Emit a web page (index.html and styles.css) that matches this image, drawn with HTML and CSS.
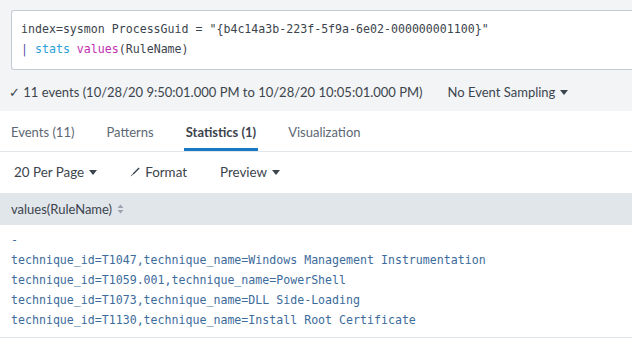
FILE: index.html
```html
<!DOCTYPE html>
<html lang="en">
<head>
    <meta charset="UTF-8">
    <title>Search</title>
    <link rel="stylesheet" href="styles.css">
</head>
<body>

    <!-- Search bar -->
    <div class="search-area">
        <div class="search-box">
            <div class="q-line">index=sysmon ProcessGuid = "{b4c14a3b-223f-5f9a-6e02-000000001100}"</div>
            <div class="q-line"><span class="q-pipe">|</span> <span class="q-cmd">stats</span> <span class="q-fn">values</span>(RuleName)</div>
        </div>
        <div class="status">
            <span class="status-text">&#10003; 11 events (10/28/20 9:50:01.000 PM to 10/28/20 10:05:01.000 PM)</span>
            <span class="dropdown">No Event Sampling <span class="caret"></span></span>
        </div>
    </div>

    <!-- Tabs -->
    <div class="tabs">
        <div class="tab">Events (11)</div>
        <div class="tab">Patterns</div>
        <div class="tab active">Statistics (1)</div>
        <div class="tab">Visualization</div>
    </div>

    <!-- Toolbar -->
    <div class="toolbar">
        <span class="dropdown">20 Per Page <span class="caret"></span></span>
        <span class="tool">
            <svg class="pencil" width="10" height="10" viewBox="0 0 10 10"><path d="M8.6 0.4 L9.6 1.4 L3.6 7.4 L2.6 6.4 Z" fill="#3c444d"/><path d="M2.2 6.9 L3.1 7.8 L0.5 9.5 Z" fill="#3c444d"/></svg>
            Format
        </span>
        <span class="dropdown">Preview <span class="caret"></span></span>
    </div>

    <!-- Results table -->
    <div class="table-head">
        values(RuleName)
        <svg class="sort" width="7" height="10" viewBox="0 0 7 10"><path d="M0.5 4 L3.5 0.5 L6.5 4 Z M0.5 6 L3.5 9.5 L6.5 6 Z" fill="#9aa4ae"/></svg>
    </div>
    <div class="rows">
        <div class="row">-</div>
        <div class="row">technique_id=T1047,technique_name=Windows Management Instrumentation</div>
        <div class="row">technique_id=T1059.001,technique_name=PowerShell</div>
        <div class="row">technique_id=T1073,technique_name=DLL Side-Loading</div>
        <div class="row">technique_id=T1130,technique_name=Install Root Certificate</div>
    </div>

</body>
</html>
```

FILE: styles.css
```css
/* General */
body {
    margin: 0;
    font-family: Lato, "Open Sans", sans-serif;
    font-size: 13px;
    color: #3c444d;
    background-color: #ffffff;
}

/* Search area */
.search-area {
    background-color: #f2f4f5;
    padding: 10px 0 9px 11px;
}

.search-box {
    background-color: #ffffff;
    border: 1px solid #c3cbd4;
    border-right: none;
    border-radius: 3px 0 0 3px;
    padding: 8px 0 10px 9px;
    font-family: "DejaVu Sans Mono", monospace;
    font-size: 11.6px;
    color: #3c444d;
}

.q-line {
    line-height: 20px;
    white-space: pre;
}

.q-pipe { color: #5b4fa8; }
.q-cmd { color: #2a9fd8; }
.q-fn { color: #c12eb2; }

.status {
    display: flex;
    gap: 25px;
    margin: 12px 0 0 -2px;
    line-height: 20px;
}

.dropdown {
    display: inline-flex;
    align-items: center;
    gap: 5px;
}

.caret {
    width: 0;
    height: 0;
    border-left: 4px solid transparent;
    border-right: 4px solid transparent;
    border-top: 5px solid #3c444d;
}

/* Tabs */
.tabs {
    display: flex;
    gap: 28px;
    padding: 11px 0 0 9px;
    border-bottom: 1px solid #e1e6eb;
}

.tab {
    padding: 0 2px 6px;
    line-height: 20px;
    color: #5c6773;
    border-bottom: 3px solid transparent;
}

.tab.active {
    font-weight: bold;
    color: #3c444d;
    border-bottom-color: #1a78c2;
}

/* Toolbar */
.toolbar {
    display: flex;
    gap: 33px;
    padding: 10px 0 11px 14px;
    line-height: 20px;
    font-size: 13.4px;
}

.tool {
    display: inline-flex;
    align-items: center;
    gap: 5px;
}

/* Table */
.table-head {
    background-color: #e1e6eb;
    height: 32px;
    line-height: 32px;
    padding-left: 11px;
    display: flex;
    align-items: center;
    gap: 5px;
}

.rows {
    padding: 5px 0 7px 11px;
    border-bottom: 1px solid #e1e6eb;
    font-family: "DejaVu Sans Mono", monospace;
    font-size: 11.6px;
    color: #3d6b9b;
}

.row {
    line-height: 20px;
    white-space: pre;
}
```
